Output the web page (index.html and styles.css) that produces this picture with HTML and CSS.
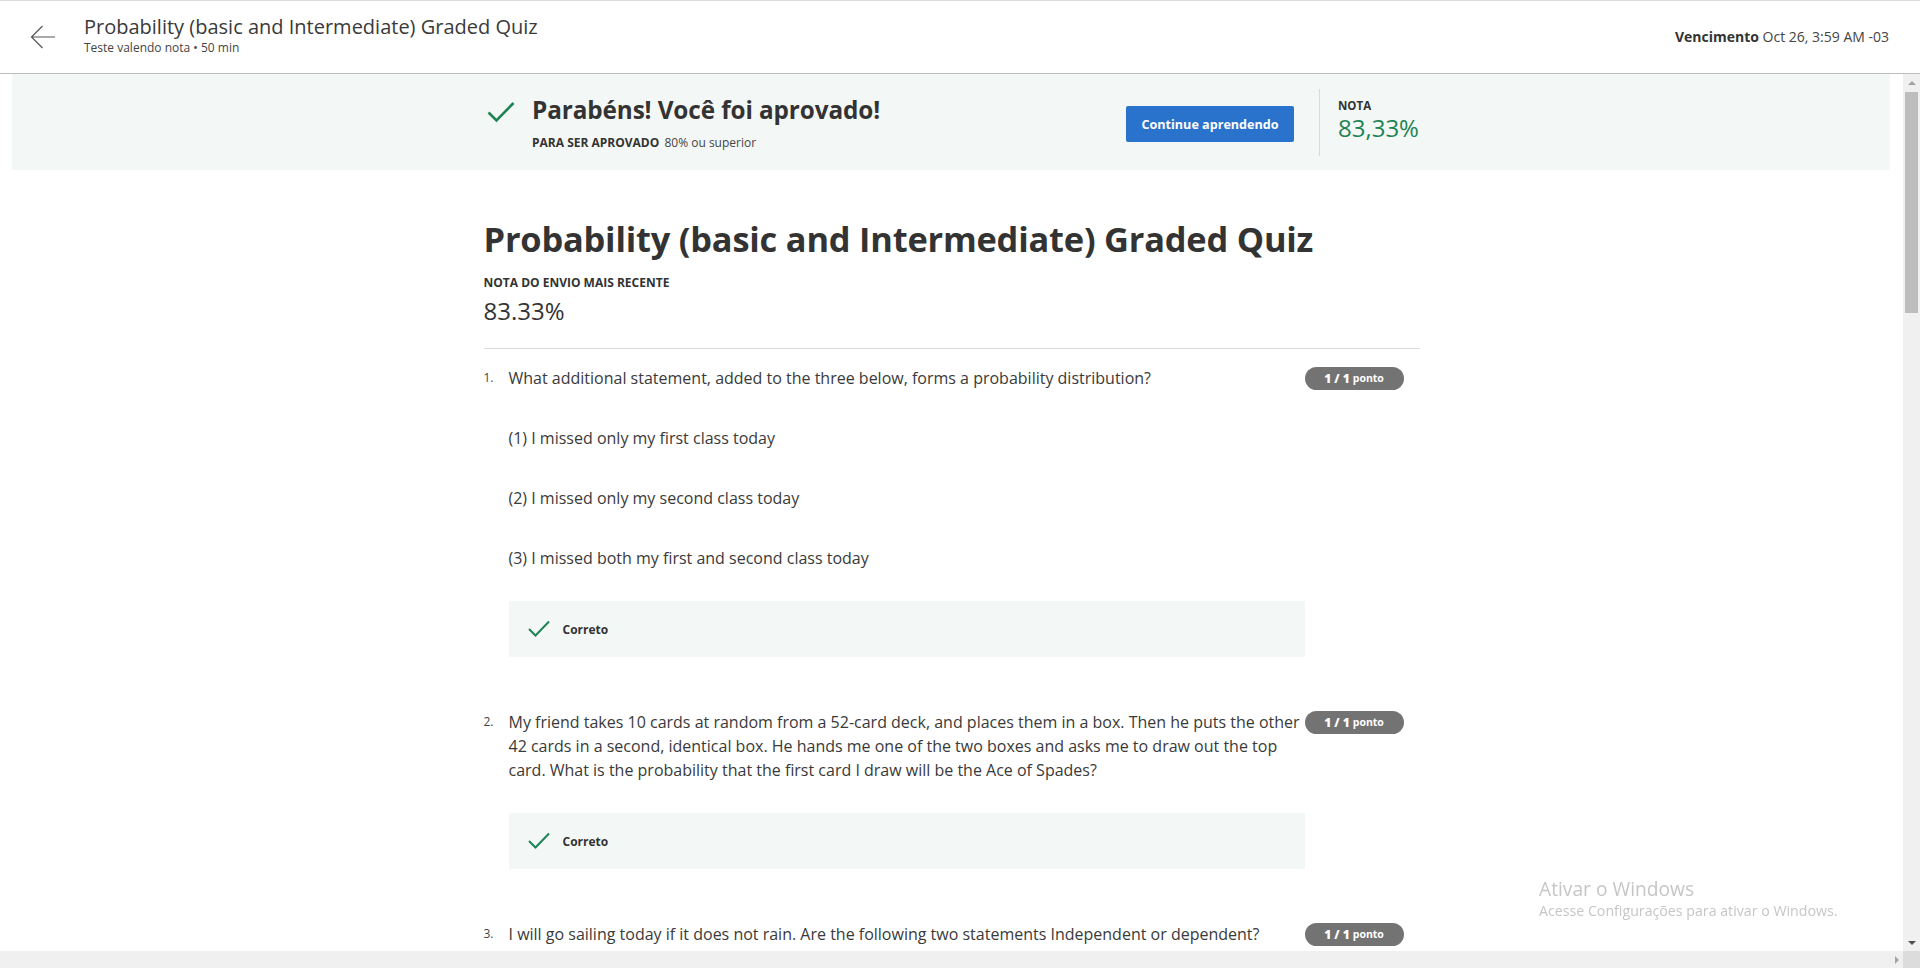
FILE: index.html
```html
<!DOCTYPE html>
<html lang="pt">
<head>
<meta charset="utf-8">
<title>Probability (basic and Intermediate) Graded Quiz</title>
<link rel="stylesheet" href="styles.css">
</head>
<body>
<div class="app">
  <header class="topbar">
    <button class="back" aria-label="Voltar">
      <svg width="26" height="26" viewBox="0 0 26 26"><path d="M25 13H1.5M12.5 2L1.5 13L12.5 24" fill="none" stroke="#555" stroke-width="1.2"/></svg>
    </button>
    <div class="titles">
      <div class="page-title">Probability (basic and Intermediate) Graded Quiz</div>
      <div class="page-sub">Teste valendo nota • 50 min</div>
    </div>
    <div class="due"><b>Vencimento</b> Oct 26, 3:59 AM -03</div>
  </header>

  <div class="viewport">
    <main class="scroll">
      <section class="banner">
        <div class="banner-inner">
          <svg class="big-check" width="28" height="22" viewBox="0 0 28 22"><path d="M1.5 11.5L9.5 19.5L26.5 2" fill="none" stroke="#1f8354" stroke-width="2.6"/></svg>
          <div class="pass">
            <h2>Parabéns! Você foi aprovado!</h2>
            <div class="req"><b>PARA SER APROVADO</b> 80% ou superior</div>
          </div>
          <button class="cta">Continue aprendendo</button>
          <div class="vdiv"></div>
          <div class="grade">
            <div class="grade-label">NOTA</div>
            <div class="grade-value">83,33%</div>
          </div>
        </div>
      </section>

      <div class="content">
        <h1 class="quiz-title">Probability (basic and Intermediate) Graded Quiz</h1>
        <div class="recent-label">NOTA DO ENVIO MAIS RECENTE</div>
        <div class="recent-value">83.33%</div>
        <hr class="rule">

        <div class="question">
          <div class="qnum">1.</div>
          <div class="qbody">
            <p>What additional statement, added to the three below, forms a probability distribution?</p>
            <p>(1) I missed only my first class today</p>
            <p>(2) I missed only my second class today</p>
            <p>(3) I missed both my first and second class today</p>
            <div class="feedback">
              <svg width="22" height="18" viewBox="0 0 22 18"><path d="M1 9L7.5 15.5L21 1.5" fill="none" stroke="#1f8354" stroke-width="2"/></svg>
              <span>Correto</span>
            </div>
          </div>
          <div class="score"><b>1 / 1</b> ponto</div>
        </div>

        <div class="question">
          <div class="qnum">2.</div>
          <div class="qbody">
            <p>My friend takes 10 cards at random from a 52-card deck, and places them in a box. Then he puts the other 42 cards in a second, identical box. He hands me one of the two boxes and asks me to draw out the top card. What is the probability that the first card I draw will be the Ace of Spades?</p>
            <div class="feedback">
              <svg width="22" height="18" viewBox="0 0 22 18"><path d="M1 9L7.5 15.5L21 1.5" fill="none" stroke="#1f8354" stroke-width="2"/></svg>
              <span>Correto</span>
            </div>
          </div>
          <div class="score"><b>1 / 1</b> ponto</div>
        </div>

        <div class="question">
          <div class="qnum">3.</div>
          <div class="qbody">
            <p>I will go sailing today if it does not rain. Are the following two statements Independent or dependent?</p>
          </div>
          <div class="score"><b>1 / 1</b> ponto</div>
        </div>
      </div>
    </main>
    <div class="vscroll">
      <span class="arrow up"></span>
      <span class="thumb"></span>
      <span class="arrow down"></span>
    </div>
    <div class="hscroll"><span class="arrow right"></span></div>
    <div class="corner"></div>
  </div>
</div>
<div class="watermark">
  <div class="wm-title">Ativar o Windows</div>
  <div class="wm-sub">Acesse Configurações para ativar o Windows.</div>
</div>
</body>
</html>
```
FILE: styles.css
```css
* { box-sizing: border-box; }
html, body { margin: 0; padding: 0; }
body {
  width: 1920px;
  height: 968px;
  overflow: hidden;
  background: #fff;
  font-family: "Open Sans", "Noto Sans", sans-serif;
  color: #333;
}
.app {
  display: grid;
  grid-template-rows: 74px 894px;
  height: 968px;
}
.topbar {
  display: flex;
  align-items: center;
  border-top: 1px solid #dcdcdc;
  border-bottom: 1px solid #bdbdbd;
  padding: 0 31px 0 30px;
}
.back {
  border: 0;
  background: none;
  padding: 0;
  width: 26px;
  height: 28px;
  margin-right: 28px;
  display: flex;
  align-items: center;
  justify-content: center;
}
.titles { flex: 1; display: flex; flex-direction: column; }
.page-title { font-size: 20px; line-height: 26px; color: #3a3a3a; margin-top: -4px; }
.page-sub { font-size: 12px; line-height: 16px; color: #444; margin-top: 0; }
.due { font-size: 14px; color: #444; margin-top: -1px; }
.due b { color: #333; }

.viewport {
  display: grid;
  grid-template-columns: 1903px 17px;
  grid-template-rows: 877px 17px;
  overflow: hidden;
}
.scroll { overflow: hidden; }
.banner {
  margin: 0 13px 0 12px;
  background: #f3f8f6;
  height: 96px;
}
.banner-inner {
  width: 936px;
  margin: 0 auto;
  height: 100%;
  display: flex;
  align-items: center;
}
.big-check { margin: -20px 17px 0 4px; }
.pass { flex: 1; margin-top: 2px; }
.pass h2 {
  margin: 0;
  font-size: 24.3px;
  line-height: 30px;
  font-weight: 700;
  color: #333;
  letter-spacing: -0.1px;
}
.req { font-size: 12px; color: #444; margin-top: 9px; }
.req b { font-weight: 700; color: #333; margin-right: 2px; }
.cta {
  width: 168px;
  height: 36px;
  border: 0;
  border-radius: 2px;
  background: #2a73cc;
  color: #fff;
  font-family: inherit;
  font-weight: 700;
  font-size: 12.6px;
  margin-top: 4px;
}
.vdiv { width: 1px; height: 67px; background: #dadada; margin: 0 18px 0 25px; }
.grade { width: 81px; margin-top: -4px; }
.grade-label { font-size: 11.5px; font-weight: 700; color: #333; line-height: 16px; }
.grade-value { font-size: 24px; color: #1f8354; line-height: 28px; }

.content {
  width: 936px;
  margin: 0 auto;
  padding-top: 46px;
}
.quiz-title {
  margin: 0;
  font-size: 34.4px;
  line-height: 46px;
  font-weight: 700;
  color: #333;
  letter-spacing: -0.2px;
}
.recent-label { font-size: 12px; font-weight: 700; color: #333; margin-top: 13px; line-height: 16px; }
.recent-value { font-size: 24px; line-height: 30px; color: #333; margin-top: 5px; }
.rule { border: 0; border-top: 1px solid #dcdcdc; margin: 22px 0 0; }

.question {
  display: flex;
  align-items: flex-start;
  padding-right: 16px;
  margin-top: 17px;
}
.question + .question { margin-top: 53px; }
.qnum { width: 25px; font-size: 12px; line-height: 24px; color: #444; }
.qbody { flex: 1; display: flex; flex-direction: column; gap: 36px; }
.qbody p { margin: 0; font-size: 16px; line-height: 24px; color: #3a3a3a; }
.feedback {
  margin-top: -5px;
  height: 56px;
  background: #f3f8f6;
  display: flex;
  align-items: center;
  padding-left: 19px;
}
.feedback svg { margin-right: 13px; }
.feedback span { font-size: 12px; font-weight: 700; color: #333; }
.score {
  width: 99px;
  height: 23px;
  margin-top: 0.5px;
  border-radius: 12px;
  background: #737373;
  color: #fff;
  font-size: 10.5px;
  font-weight: 700;
  display: flex;
  align-items: center;
  justify-content: center;
  gap: 3px;
}
.score b { font-size: 12px; }

.vscroll {
  background: #f0f0f0;
  position: relative;
}
.vscroll .thumb {
  position: absolute;
  left: 2px; right: 2px;
  top: 18px; height: 221px;
  background: #bdbdbd;
}
.arrow { position: absolute; width: 0; height: 0; }
.arrow.up { left: 5px; top: 7px; border: 4px solid transparent; border-bottom-color: #a3a3a3; border-top: 0; }
.arrow.down { left: 5px; bottom: 6px; border: 4px solid transparent; border-top-color: #505050; border-bottom: 0; }
.hscroll { background: #f0f0f0; position: relative; }
.arrow.right { right: 4px; top: 5px; border: 4px solid transparent; border-left-color: #a3a3a3; border-right: 0; }
.corner { background: #dcdcdc; }

.watermark {
  position: fixed;
  left: 1539px;
  top: 876px;
  font-family: "Open Sans", "Noto Sans", sans-serif;
  color: #c6c6c6;
}
.wm-title { font-size: 19.2px; line-height: 25px; }
.wm-sub { font-size: 14.2px; line-height: 19px; }
```
